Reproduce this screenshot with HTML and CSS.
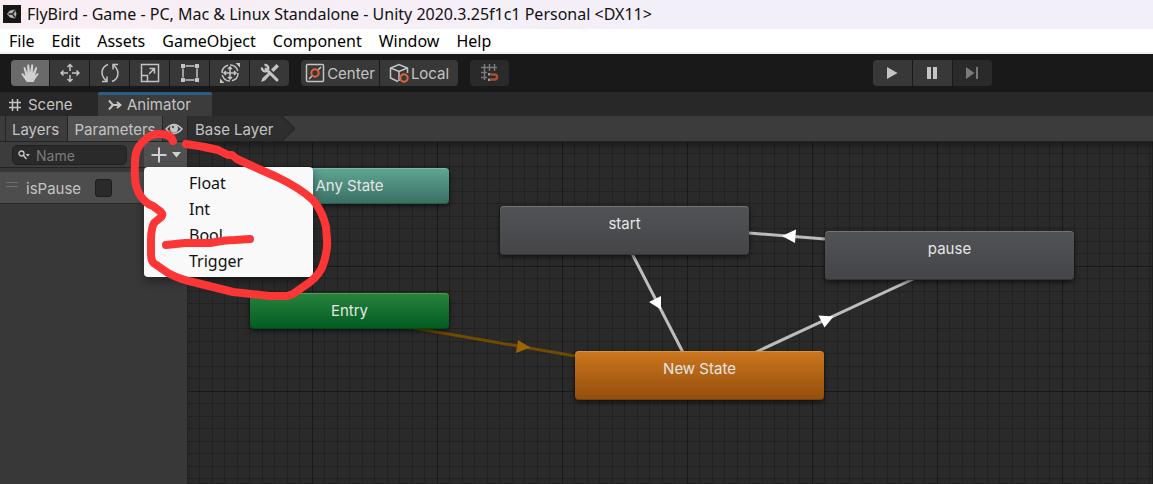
FILE: index.html
```html
<!DOCTYPE html>
<html lang="en">
<head>
<meta charset="utf-8">
<title>FlyBird - Game - PC, Mac &amp; Linux Standalone</title>
<link rel="stylesheet" href="styles.css">
</head>
<body>
<header class="titlebar">
  <svg class="app-icon" viewBox="0 0 18 18" width="18" height="18"><rect width="18" height="18" fill="#161616"/><path d="M4 9 7 5.500 12 4.500 13.500 9 12 13.500 7 12.500Z" fill="#b5b5b5"/><path d="M5.500 9H9.500M9.500 9 12 5.500M9.500 9 12 12.500" stroke="#222" stroke-width="1.300"/></svg>
  <span>FlyBird - Game - PC, Mac &amp; Linux Standalone - Unity 2020.3.25f1c1 Personal &lt;DX11&gt;</span>
</header>
<nav class="menubar">
  <button>File</button><button>Edit</button><button>Assets</button><button>GameObject</button><button>Component</button><button>Window</button><button>Help</button>
</nav>
<div class="toolbar">
  <div class="group tools">
    <button class="tool active" aria-label="Hand"><svg viewBox="0 0 20 20"><path d="M7 19C5 17 3.500 14 1.500 11.500 1 10.500 2.300 9.700 3.300 10.700L5.500 13 3.700 5.500C3.300 4 5 3.500 5.500 5L7.300 10 7.200 2.500C7.200 1 9.200 1 9.300 2.500L10 9.500 11.200 2.300C11.500 .8 13.300 1.200 13.200 2.700L12.800 10 15.300 4.800C16 3.400 17.500 4.200 17 5.600L15 12.500 17 10.500C18 9.800 19 10.500 18.400 11.500L14.500 17 13.500 19Z" fill="currentColor"/></svg></button>
    <button class="tool" aria-label="Move"><svg viewBox="0 0 20 20"><path d="M10 8V1.500M7.500 4 10 1.500 12.500 4M10 12V18.500M7.500 16 10 18.500 12.500 16M8 10H1M3.500 7.500 1 10 3.500 12.500M12 10H19M16.500 7.500 19 10 16.500 12.500" class="line"/></svg></button>
    <button class="tool" aria-label="Rotate"><svg viewBox="0 0 20 20"><path d="M8 1.500C1 4 0 12 6 17.500M2 18.500H7V13.500M12 18.500C19 16 20 8 14 2.500M18 1.500H13V6.500" class="line"/></svg></button>
    <button class="tool" aria-label="Scale"><svg viewBox="0 0 20 20"><path d="M1.500 1.500H18.500V18.500H1.500ZM1.500 12.500H7.500V18.500M9 11 14.500 5.500M9.500 5.500H14.500V10.500" class="line"/></svg></button>
    <button class="tool" aria-label="Rect"><svg viewBox="0 0 20 20"><path d="M5.500 3H14.500M5.500 17H14.500M3 5.500V14.500M17 5.500V14.500" class="line"/><path d="M1 1h4v4H1zM15 1h4v4h-4zM1 15h4v4H1zM15 15h4v4h-4z" fill="currentColor"/></svg></button>
    <button class="tool" aria-label="Transform"><svg viewBox="0 0 20 20"><circle cx="10" cy="10" r="8" class="line" stroke-dasharray="10.500 2"/><path d="M10 4V16M4 10H16M8 6 10 4 12 6M8 14 10 16 12 14M6 8 4 10 6 12M14 8 16 10 14 12" class="line"/><path d="M15.500 0H20V4.500ZM0 15.500V20H4.500Z" fill="currentColor"/></svg></button>
    <button class="tool" aria-label="Custom tools"><svg viewBox="0 0 20 20"><path d="M6 6 17 17" stroke="currentColor" stroke-width="3" stroke-linecap="round"/><path d="M4.500 2A3.200 3.200 0 1 1 2 4.500" fill="none" stroke="currentColor" stroke-width="2.400"/><path d="M16.500 1 19 3.500 13.500 9 11 6.500ZM8.500 9.500 10.500 11.500 5 17.500 1 19 2.500 15Z" fill="currentColor"/></svg></button>
  </div>
  <div class="group pivots">
    <button class="tool wide"><svg viewBox="0 0 20 20"><rect x="1.500" y="1.500" width="17" height="17" rx="1" class="line"/><path d="M4 16 7 13M13 7 16 4" class="line"/><circle cx="10" cy="10" r="3.700" class="accent"/></svg>Center</button>
    <button class="tool wide"><svg viewBox="0 0 20 20"><path d="M9 18.500 1.500 15V5L10 1.500 18.500 5V10M1.500 5 10 8.500 18.500 5M10 8.500V18" class="line"/><circle cx="15" cy="15" r="3.700" class="accent"/></svg>Local</button>
  </div>
  <button class="tool disabled" aria-label="Grid snapping" disabled><svg viewBox="0 0 20 20"><path d="M4.500 1V17M9.500 1V8M14.500 1V8M1 4.500H17M1 9.500H7M1 14.500H7" class="line"/><path d="M11 11.500H14.500A2.500 2.500 0 0 1 14.500 16.500H11" fill="none" stroke="#a8502f" stroke-width="2.500"/><path d="M8 10h2.500v2.500H8zM8 15.500h2.500V18H8z" fill="#999"/></svg></button>
  <div class="group playback">
    <button class="tool" aria-label="Play"><svg viewBox="0 0 20 20"><path d="M4 4 14.500 10 4 16Z" fill="currentColor"/></svg></button>
    <button class="tool" aria-label="Pause"><svg viewBox="0 0 20 20"><path d="M4 4h4v12H4zM10 4h4v12h-4z" fill="currentColor"/></svg></button>
    <button class="tool disabled" aria-label="Step" disabled><svg viewBox="0 0 20 20"><path d="M3 4 11.500 10 3 16ZM13 4h2v12h-2z" fill="currentColor"/></svg></button>
  </div>
</div>
<div class="tabs">
  <button class="tab"><svg viewBox="0 0 14 14"><path d="M4.500 1V13M9.500 1V13M1 4.500H13M1 9.500H13" class="line"/></svg>Scene</button>
  <button class="tab current"><svg viewBox="0 0 14 14"><path d="M1 2.500 5 7 1 11.500M5 7H12M9 4 12.500 7 9 10" class="line thick"/></svg>Animator</button>
</div>
<div class="subbar">
  <div class="side-tabs">
    <button class="layers">Layers</button><button class="params">Parameters</button>
    <button class="eye" aria-label="Toggle panel"><svg viewBox="0 0 18 14" width="18" height="14"><path d="M1 7Q9-2 17 7Q9 16 1 7Z" fill="none" stroke="#c4c4c4" stroke-width="1.500"/><circle cx="9" cy="6.500" r="4" fill="#c4c4c4"/><circle cx="8" cy="5" r="1.200" fill="#555"/></svg></button>
  </div>
  <div class="crumbs"><a class="crumb" href="#base">Base Layer</a><svg class="crumb-end" viewBox="0 0 14 25" width="14" height="25"><path d="M0 0 13 12.500 0 25Z" fill="#2e2e2e"/><path d="M0 0 13 12.500 0 25" fill="none" stroke="#1f1f1f"/></svg></div>
</div>
<main class="workspace">
  <aside class="side">
    <div class="search-row">
      <label class="search"><svg viewBox="0 0 12 10" width="12" height="10"><circle cx="3.500" cy="3.500" r="2.500" fill="none" stroke="#c4c4c4" stroke-width="1.400"/><path d="M5.500 5.500 8.500 9" stroke="#c4c4c4" stroke-width="1.500"/><path d="M7.500 4H12L9.800 6.500Z" fill="#c4c4c4"/></svg><input type="text" placeholder="Name" aria-label="Search parameters"></label>
      <div class="add-wrap">
        <button class="add" aria-label="Add parameter"><svg viewBox="0 0 32 18" width="32" height="18"><path d="M9 1.500V16.500M1.500 9H16.500" stroke="#cfcfcf" stroke-width="2"/><path d="M22 6H31L26.500 11.500Z" fill="#cfcfcf"/></svg></button>
        <div class="menu"><button>Float</button><button>Int</button><button>Bool</button><button>Trigger</button></div>
      </div>
    </div>
    <div class="param"><span class="grip"></span><label for="isPause">isPause</label><input type="checkbox" id="isPause"></div>
  </aside>
  <section class="graph">
    <svg class="links" width="965" height="342" viewBox="188 142 965 342">
      <path d="M400 325.500 575 356" stroke="#714a00" stroke-width="3"/><path d="M518 340 530.500 347.500 516 353Z" fill="#9b6500"/>
      <g stroke="#bdbdbd" stroke-width="3"><path d="M625 240 690 366M749 233 825 239M740 359.500 925 273.500"/></g>
      <path d="M649 302 661 296V309.500ZM782 236 796 229.500 795 243ZM818.500 315.500 833.500 316.500 824.500 327.500Z" fill="#fff"/>
    </svg>
    <div class="node any">Any State</div>
    <div class="node entry">Entry</div>
    <div class="node state start">start</div>
    <div class="node state pause">pause</div>
    <div class="node state fresh">New State</div>
  </section>
</main>
<svg class="marker" width="360" height="320" viewBox="0 0 360 320"><path d="M173 141Q171 136 167 135Q155 132 147 138C137 146 135 153 135 162C134 182 136 191 143 199Q147 204 153 206L161 212Q164 215 160 218L154 223Q151 229 151 240V254Q151 262 155 264L168 273Q181 280 197 283L233 292L270 296H287L293 294L310 282Q320 274 323 265Q328 250 327 240L326 227Q323 212 313 200Q300 188 277 177L250 165L237 159L232 155H228L218 150Q202 146 186 144M166 245 185 243 210 243Q225 240 235 240L250 239"/></svg>
</body>
</html>
```

FILE: styles.css
```css
* { box-sizing: border-box; }
body {
  margin: 0; min-height: 100vh; display: flex; flex-direction: column; overflow: hidden;
  background: #191919; color: #c4c4c4; font: 15px Inter, sans-serif;
}
button { margin: 0; padding: 0; border: 0; background: none; color: inherit; font: inherit; }
svg { display: block; flex: none; }
.line { fill: none; stroke: currentColor; stroke-width: 1.5px; }
.thick { stroke-width: 2px; }
.accent { fill: none; stroke: #e0643c; stroke-width: 2px; }

.titlebar {
  height: 29px; display: flex; align-items: center; gap: 6px; padding: 0 0 2px 3px;
  background: linear-gradient(90deg, #f9eef4, #f3eff8 60%); color: #111;
  font: 16px "Noto Sans", sans-serif; white-space: nowrap;
}
.menubar {
  height: 25px; display: flex; gap: 17px; padding: 0 9px; background: #fff;
  border-bottom: 2px solid #f0f0f0; color: #000; font: 16px "Noto Sans", sans-serif;
}

.toolbar { height: 38px; display: flex; align-items: center; padding: 0 11px; background: #191919; }
.group { display: flex; gap: 1px; border-radius: 4px; overflow: hidden; }
.tool {
  width: 39px; height: 26px; display: flex; align-items: center; justify-content: center; gap: 2px;
  background: #383838; color: #c4c4c4;
}
.tool svg { width: 20px; height: 20px; }
.tool.active { width: 38px; background: #6a6a6a; color: #d0d0d0; }
.tool.wide { width: 78px; }
.pivots { margin: 0 12px 0 12px; }
.disabled { background: #2a2a2a; color: #7a7a7a; border-radius: 4px; }
.playback { margin-left: auto; margin-right: 150px; }
.playback .disabled { border-radius: 0; }

.tabs { height: 24px; display: flex; background: #282828; }
.tab { width: 98px; display: flex; align-items: center; gap: 6px; padding: 0 0 0 8px; border-top: 1px solid #242424; }
.tab svg { width: 14px; height: 14px; }
.tab.current { width: 114px; padding: 0 0 2px 10px; gap: 5px; border-top: 3px solid #2c5d87; border-radius: 2px 2px 0 0; background: #3c3c3c; }

.subbar { height: 26px; display: flex; background: #3c3c3c; border-bottom: 1px solid #232323; }
.side-tabs { width: 188px; display: flex; padding-left: 5px; border-right: 1px solid #232323; }
.side-tabs button { padding-top: 2px; border-left: 1px solid #232323; }
.side-tabs .layers { width: 62px; padding-right: 2px; }
.params { width: 95px; background: #505050; }
.side-tabs .eye { flex: 1; display: grid; place-items: center; padding: 0 3px 0 0; }
.crumbs { display: flex; }
.crumb { display: flex; align-items: center; padding: 2px 9px 0 7px; background: #2e2e2e; color: #c4c4c4; text-decoration: none; }

.workspace { flex: 1; display: flex; }
.side { width: 188px; background: #383838; border-right: 1px solid #232323; }
.search-row { height: 26px; display: flex; justify-content: space-between; background: #3c3c3c; border-bottom: 1px solid #232323; }
.search {
  width: 115px; height: 20px; margin: 3px 0 0 12px; padding-left: 5px; display: flex; align-items: center; gap: 6px;
  background: #2a2a2a; border: 1px solid #202020; border-radius: 5px;
}
.search input { width: 80px; padding: 0; border: 0; outline: 0; background: none; color: #c4c4c4; font: 14px Inter, sans-serif; }
.search input::placeholder { color: #7b7b7b; }
.add-wrap { position: relative; display: flex; }
.add { width: 43px; display: grid; place-items: center; background: #505050; }
.menu {
  position: absolute; z-index: 2; top: 25px; left: 0; width: 169px; padding: 3px 0; display: flex; flex-direction: column;
  background: #f9f9f9; border-radius: 4px; box-shadow: 0 4px 10px #0006;
}
.menu button { height: 26px; padding-left: 45px; text-align: left; color: #111; font: 16px "Noto Sans", sans-serif; }
.param {
  height: 32px; margin-top: 4px; display: flex; align-items: center; padding: 2px 0 0 6px;
  background: #4d4d4d; border-bottom: 1px solid #2c2c2c;
}
.grip { width: 12px; height: 5px; margin: 0 8px 8px 0; border: solid #707070; border-width: 1px 0; }
.param input { appearance: none; width: 17px; height: 18px; margin: 0 0 2px 14px; background: #2a2a2a; border: 1px solid #1c1c1c; border-radius: 3px; }

.graph {
  position: relative; flex: 1; overflow: hidden; background-color: #2a2a2a;
  background-image:
    linear-gradient(90deg, #191919 1px, transparent 1px), linear-gradient(#191919 1px, transparent 1px),
    repeating-linear-gradient(90deg, #212121 0 1px, transparent 1px 12px, #212121 12px 13px, transparent 13px 25px),
    repeating-linear-gradient(#212121 0 1px, transparent 1px 12px, #212121 12px 13px, transparent 13px 25px);
  background-size: 125px 125px, 125px 125px, auto, auto;
  background-position: -1px -1px;
  box-shadow: inset 0 7px 7px -4px #0006;
}
.links { position: absolute; top: 0; left: 0; }
.node {
  position: absolute; left: 62px; width: 199px; height: 36px; line-height: 35px; text-align: center;
  border-radius: 4px; color: #e6e6e6; box-shadow: inset 0 1px #ffffff33, inset 0 -1px #0003, 0 2px 5px #0009;
}
.any { top: 26px; background: linear-gradient(#60a695, #396e63); }
.entry { top: 151px; background: linear-gradient(#28833c, #005c20); }
.state { width: 249px; height: 49px; background: linear-gradient(#505356, #454548); }
.start { top: 64px; left: 312px; }
.pause { top: 89px; left: 637px; }
.fresh { top: 209px; left: 387px; background: linear-gradient(#cd761f, #934e0c); }

.marker { position: absolute; z-index: 3; top: 0; left: 0; pointer-events: none; fill: none; stroke: #fc3636; stroke-width: 8px; stroke-linecap: round; stroke-linejoin: round; }
```
